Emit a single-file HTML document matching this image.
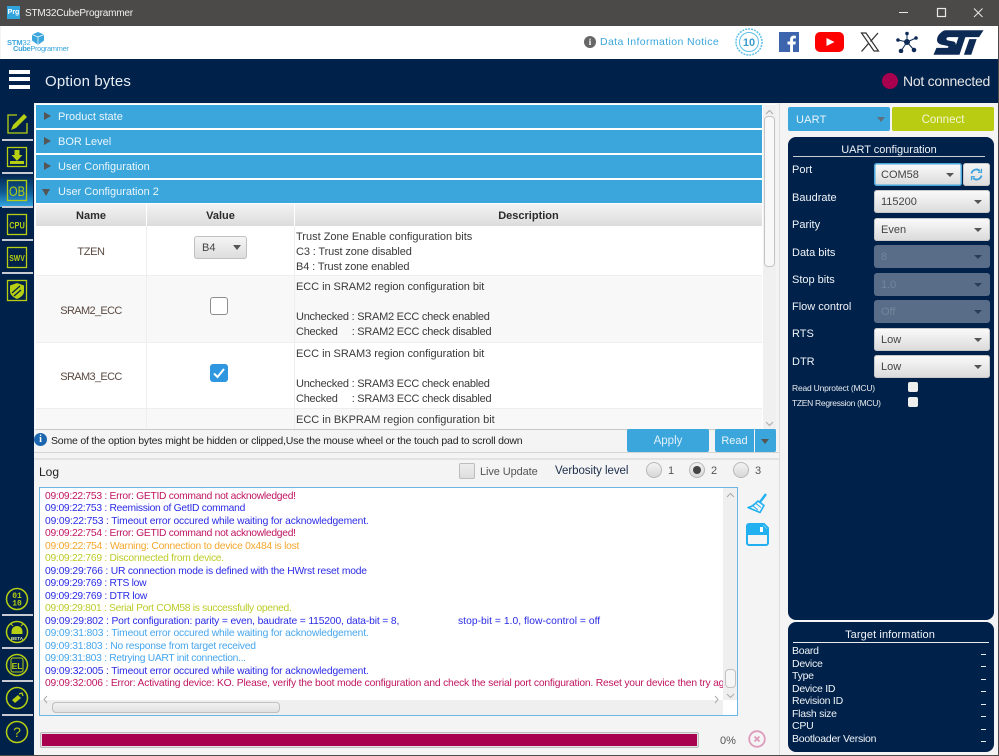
<!DOCTYPE html>
<html><head><meta charset="utf-8"><title>STM32CubeProgrammer</title>
<style>
html,body{margin:0;padding:0;width:999px;height:756px;overflow:hidden;background:#f4f4f4}
body{font-family:"Liberation Sans",sans-serif;font-size:11px;position:relative}
.a,.t{position:absolute}
.t{white-space:nowrap;line-height:14px;height:14px}
.acc{position:absolute;left:36px;width:726px;height:23px;background:#3aa6dc;color:#eaf6fc;font-size:11px;line-height:25px;padding-left:22px;box-sizing:border-box}
.tri{position:absolute;left:8px;top:7px;width:0;height:0;border-left:7px solid #555;border-top:4.5px solid transparent;border-bottom:4.5px solid transparent}
.trd{position:absolute;left:6px;top:9px;width:0;height:0;border-top:7px solid #555;border-left:4.5px solid transparent;border-right:4.5px solid transparent}
.th{position:absolute;top:204px;height:22px;background:linear-gradient(#f3f3f3,#dcdcdc);font-weight:bold;color:#2b2b2b;text-align:center;line-height:24px;font-size:11px}
.c{position:absolute;color:#333;font-size:11px;white-space:nowrap}
.line{line-height:15px;color:#3a3a3a}
.n{letter-spacing:-.25px}
.cb{position:absolute;left:874px;width:116px;height:23px;border-radius:3px;background:linear-gradient(#fbfbfb,#dadada);color:#444;font-size:11px;line-height:25px;padding-left:7px;box-sizing:border-box;box-shadow:0 0 0 1px #c8c8c8 inset}
.cb:after{content:"";position:absolute;right:8px;top:10px;border-top:4.5px solid #555;border-left:4px solid transparent;border-right:4px solid transparent}
.dis{background:#596d88;color:#74859c;box-shadow:none}
.dis:after{border-top-color:#2a3d58}
.lab{position:absolute;left:792px;color:#f0f4f8;white-space:nowrap;line-height:14px;font-size:11px}
.log{position:absolute;left:45px;white-space:nowrap;line-height:13px;font-size:10.3px;letter-spacing:-.28px}
.e{color:#c01560}.b{color:#2a2ae6}.w{color:#f5a72c}.g{color:#bccc28}.l{color:#46a6ee}
.sep{position:absolute;left:2px;width:31px;height:2px;background:#c8ccd2}
.ti{position:absolute;left:792px;color:#f0f4f8;line-height:13px;font-size:10.5px;white-space:nowrap;letter-spacing:-.25px}
.da{position:absolute;left:981px;width:5px;height:1px;background:#e8ecf0}
.ck{position:absolute;width:10px;height:10px;left:908px;background:#eee;border-radius:2px}
.rad{position:absolute;top:462px;width:16px;height:16px;border-radius:50%;background:linear-gradient(#f4f4f4,#d6d6d6);box-shadow:0 0 0 1px #b9b9b9 inset}
</style></head>
<body>
<!-- title bar -->
<div class="a" style="left:0;top:0;width:999px;height:26px;background:#4b4a48"></div>
<div class="a" style="left:7px;top:6px;width:13px;height:13px;background:#32a4dc;color:#fff;font-size:7px;font-weight:bold;line-height:13px;text-align:center">Prg</div>
<div class="t" style="left:25px;top:7px;color:#f0f0f0;font-size:10px;letter-spacing:-.2px">STM32CubeProgrammer</div>
<svg class="a" style="left:890px;top:0" width="109" height="26" fill="none" stroke="#e8e8e8" stroke-width="1"><path d="M9 12.500h9"/><rect x="47.500" y="8.500" width="8" height="8" stroke-width="1.200"/><path d="M84 8.500l8.500 8.500M92.500 8.500L84 17"/></svg>
<!-- white header -->
<div class="a" style="left:1px;top:26px;width:997px;height:33px;background:#fff"></div>
<div class="t" style="left:7px;top:36px;font-size:7.500px;color:#3aa6dc;font-weight:bold;letter-spacing:-.1px">STM<span style="font-weight:normal">32</span></div>
<div class="t" style="left:13px;top:42px;font-size:7.500px;color:#3aa6dc;font-weight:bold;letter-spacing:-.35px">Cube<span style="font-weight:normal">Programmer</span></div>
<svg class="a" style="left:31px;top:32px" width="14" height="13"><path d="M7 0l6 2.500v6L7 13 1 8.500v-6z" fill="#3aa6dc"/><path d="M1 2.500L7 5l6-2.500M7 5v8" stroke="#fff" stroke-width=".7" fill="none"/></svg>
<div class="a" style="left:584px;top:36px;width:12px;height:12px;border-radius:50%;background:#666;color:#fff;font:bold 9px/12px 'Liberation Serif',serif;text-align:center">i</div>
<div class="t" style="left:600px;top:35px;color:#3aa6dc;font-size:10.500px;letter-spacing:.38px">Data Information Notice</div>
<svg class="a" style="left:735px;top:28px" width="28" height="28" fill="none" stroke="#5cc0e8"><circle cx="14" cy="14" r="13" stroke-width="1.500" stroke-dasharray="2 1"/><circle cx="14" cy="14" r="9.500" stroke-width="1"/><text x="14" y="18" text-anchor="middle" font-size="11" font-weight="bold" fill="#3a9ccc" stroke="none" font-family="Liberation Sans">10</text></svg>
<svg class="a" style="left:779px;top:32px" width="20" height="20"><rect width="20" height="20" fill="#3c65ae"/><path d="M14 20v-7.500h2.400l.4-3H14V7.800c0-.9.3-1.400 1.400-1.400h1.500V3.700c-.3 0-1.100-.1-2.100-.1-2.200 0-3.700 1.300-3.700 3.800v2.100H8.500v3h2.600V20z" fill="#fff"/></svg>
<svg class="a" style="left:815px;top:32px" width="29" height="20"><rect width="29" height="20" rx="5" fill="#f00"/><path d="M11.500 6l8 4-8 4z" fill="#fff"/></svg>
<svg class="a" style="left:860px;top:32px" width="20" height="20" fill="none" stroke="#333"><path d="M1.500 1h4.500l12.500 18h-4.500z" stroke-width="1.200"/><path d="M18 1l-7.500 8.500M8.500 11.500L1.500 19.500" stroke-width="1.300"/></svg>
<svg class="a" style="left:896px;top:31px" width="22" height="22" fill="#0d2a55" stroke="#0d2a55"><path d="M11 11L11 2.500M11 11L2 9M11 11L20 7M11 11L5 20M11 11L18 19" stroke-width="1"/><circle cx="11" cy="11" r="2.500"/><circle cx="11" cy="2.500" r="1.300"/><circle cx="2" cy="9" r="1.300"/><circle cx="20" cy="7" r="1.300"/><circle cx="5" cy="20" r="1.800"/><circle cx="18" cy="19" r="1.800"/></svg>
<svg class="a" style="left:933px;top:29px" width="51" height="27" viewBox="0 0 52 27" fill="#0d2a55"><path d="M13 1H51.500L47 8H33L27 26H20L26 8H16C13 8 13 11 15.500 11.500L21 12.500C24.500 13.500 23.500 18 21.500 26H0.500L3.500 19H14.500C16 19 16.300 17.300 14.500 17L8 15.500C2.500 14 3.500 8 7 4.500C9 2.500 10.500 1 13 1Z"/><path d="M37 10h7.500l-5.500 16h-7.500z"/></svg>
<!-- navy -->
<div class="a" style="left:0;top:59px;width:999px;height:44px;background:#00214a"></div>
<div class="a" style="left:0;top:103px;width:34px;height:653px;background:#00214a"></div>
<div class="a" style="left:9px;top:70px;width:21px;height:4px;background:#fff"></div>
<div class="a" style="left:9px;top:77px;width:21px;height:4px;background:#fff"></div>
<div class="a" style="left:9px;top:85px;width:21px;height:4px;background:#fff"></div>
<div class="t" style="left:45px;top:75px;color:#e8eef4;font-size:15px;letter-spacing:.15px">Option bytes</div>
<div class="a" style="left:882px;top:73px;width:16px;height:16px;border-radius:50%;background:#a8004f"></div>
<div class="t" style="left:903px;top:74px;color:#e6e6e6;font-size:14px;letter-spacing:-.25px">Not connected</div>
<!-- sidebar -->
<div class="a" style="left:0;top:174px;width:33px;height:33px;background:linear-gradient(#03264f 0%,#0f5a94 55%,#35a8e2 100%)"></div>
<svg class="a" style="left:0;top:103px" width="34" height="210" fill="none" stroke="#b7cf12" stroke-width="1.300">
<path d="M17 12H8V30H27V20" /><path d="M11 27l2-5L24 11l3 3L16 25z" fill="#b7cf12" stroke="none"/>
<rect x="7.500" y="44.500" width="19" height="19"/><path d="M14.500 47h5v5h3L17 58l-5.500-6h3z M10 58h14v3H10z" fill="#b7cf12" stroke="none"/>
<rect x="7.500" y="77.500" width="19" height="20"/><text x="17" y="93" text-anchor="middle" font-size="13.500" fill="#b7cf12" stroke="none" font-family="Liberation Sans" textLength="16" lengthAdjust="spacingAndGlyphs">OB</text>
<rect x="7.500" y="111.500" width="19" height="20"/><text x="17" y="125.500" text-anchor="middle" font-size="9.500" font-weight="bold" fill="#b7cf12" stroke="none" font-family="Liberation Sans" textLength="15.500" lengthAdjust="spacingAndGlyphs">CPU</text>
<rect x="7.500" y="144.500" width="19" height="20"/><text x="17" y="158" text-anchor="middle" font-size="8" font-weight="bold" fill="#b7cf12" stroke="none" font-family="Liberation Sans" textLength="15.500" lengthAdjust="spacingAndGlyphs">SWV</text>
<rect x="7.500" y="177.500" width="19" height="20"/><path d="M17 180l7 2.500v6c0 3.500-3.500 6-7 7.500-3.500-1.500-7-4-7-7.500v-6z" fill="#b7cf12" stroke="none"/><path d="M12 190l8-7M14 193l7-6" stroke="#00214a" stroke-width="1.200"/>
</svg>
<div class="sep" style="top:139px"></div><div class="sep" style="top:172px"></div><div class="sep" style="top:206px"></div><div class="sep" style="top:239px"></div><div class="sep" style="top:272px"></div>
<svg class="a" style="left:0;top:580px" width="34" height="170" fill="none" stroke="#b7cf12" stroke-width="1.500">
<circle cx="17" cy="19" r="10.500"/><text x="17" y="18" text-anchor="middle" font-size="8" font-weight="bold" fill="#b7cf12" stroke="none" font-family="Liberation Mono">01</text><text x="17" y="25.500" text-anchor="middle" font-size="8" font-weight="bold" fill="#b7cf12" stroke="none" font-family="Liberation Mono">10</text>
<circle cx="17" cy="52" r="10.500"/><path d="M11.500 52c0-4 2.500-6 5.500-6s5.500 2 5.500 6v2h-11z" fill="#b7cf12" stroke="none"/><path d="M13 46l-2-2M21 46l2-2" stroke-width="1"/><text x="17" y="60" text-anchor="middle" font-size="4.500" font-weight="bold" fill="#dfe8a0" stroke="none" font-family="Liberation Sans">BETA</text>
<circle cx="17" cy="85" r="10.500"/><rect x="11" y="78" width="12" height="14" rx="2" stroke-width="1"/><text x="17" y="89" text-anchor="middle" font-size="8.500" font-weight="bold" fill="#b7cf12" stroke="none" font-family="Liberation Sans">EL</text>
<circle cx="17" cy="118" r="10.500"/><path d="M12 120l6-5 3 3-6 5z" fill="#b7cf12" stroke="none"/><path d="M19 114l3-1 1 3" stroke-width="1.200"/>
<circle cx="17" cy="152" r="10.500"/><text x="17" y="157" text-anchor="middle" font-size="14" fill="#b7cf12" stroke="none" font-family="Liberation Sans">?</text>
</svg>
<div class="sep" style="top:614px"></div><div class="sep" style="top:647px"></div><div class="sep" style="top:680px"></div><div class="sep" style="top:714px"></div>
<!-- main -->
<div class="a" style="left:34px;top:103px;width:965px;height:653px;background:#f4f4f4"></div>
<div class="a" style="left:35px;top:104px;width:741px;height:325px;background:#fff"></div>
<div class="acc" style="top:105px"><i class="tri"></i>Product state</div>
<div class="acc" style="top:130px"><i class="tri"></i>BOR Level</div>
<div class="acc" style="top:155px"><i class="tri"></i>User Configuration</div>
<div class="acc" style="top:180px"><i class="trd"></i>User Configuration 2</div>
<div class="th" style="left:36px;width:110px">Name</div>
<div class="th" style="left:147px;width:147px">Value</div>
<div class="th" style="left:295px;width:467px">Description</div>
<div class="a" style="left:36px;top:226px;width:726px;height:49px;background:#fff"></div>
<div class="a" style="left:36px;top:276px;width:726px;height:66px;background:#f8f8f8"></div>
<div class="a" style="left:36px;top:343px;width:726px;height:65px;background:#fff"></div>
<div class="a" style="left:36px;top:409px;width:726px;height:20px;background:#f8f8f8"></div>
<div class="a" style="left:146px;top:226px;width:1px;height:203px;background:#eee"></div>
<div class="a" style="left:294px;top:226px;width:1px;height:203px;background:#eee"></div>
<div class="a" style="left:36px;top:275px;width:726px;height:1px;background:#eee"></div>
<div class="a" style="left:36px;top:342px;width:726px;height:1px;background:#eee"></div>
<div class="a" style="left:36px;top:408px;width:726px;height:1px;background:#eee"></div>
<div class="c" style="left:36px;top:246px;width:110px;text-align:center;color:#5a4a42;letter-spacing:-.35px">TZEN</div>
<div class="c" style="left:36px;top:305px;width:110px;text-align:center;color:#5a4a42;letter-spacing:-.65px">SRAM2_ECC</div>
<div class="c" style="left:36px;top:371px;width:110px;text-align:center;color:#5a4a42;letter-spacing:-.65px">SRAM3_ECC</div>
<div class="a" style="left:194px;top:236px;width:53px;height:23px;border-radius:3px;background:linear-gradient(#f6f6f6,#dcdcdc);box-shadow:0 0 0 1px #c0c0c0 inset;color:#444;line-height:24px;padding-left:8px;box-sizing:border-box">B4<i class="a" style="right:6px;top:9px;border-top:5px solid #555;border-left:4px solid transparent;border-right:4px solid transparent"></i></div>
<div class="a" style="left:210px;top:297px;width:18px;height:18px;border-radius:3px;background:#fff;border:1px solid #8e8e8e;box-sizing:border-box"></div>
<svg class="a" style="left:210px;top:364px" width="18" height="18"><rect width="18" height="18" rx="3" fill="#2f97e0"/><path d="M4 9.500l3.500 3.500L14 5" fill="none" stroke="#fff" stroke-width="2"/></svg>
<div class="c line" style="left:296px;top:230px">Trust Zone Enable configuration bits<br><span style="letter-spacing:-.12px">C3 : Trust zone disabled<br>B4 : Trust zone enabled</span></div>
<div class="c line" style="left:296px;top:280px"><span style="letter-spacing:-.05px">ECC in SRAM2 region configuration bit</span><br><br><span class="n">Unchecked : SRAM2 ECC check enabled<br>Checked &nbsp;&nbsp;&nbsp;&nbsp;: SRAM2 ECC check disabled</span></div>
<div class="c line" style="left:296px;top:347px"><span style="letter-spacing:-.05px">ECC in SRAM3 region configuration bit</span><br><br><span class="n">Unchecked : SRAM3 ECC check enabled<br>Checked &nbsp;&nbsp;&nbsp;&nbsp;: SRAM3 ECC check disabled</span></div>
<div class="c line" style="left:296px;top:413px">ECC in BKPRAM region configuration bit</div>
<!-- v scroll -->
<div class="a" style="left:763px;top:105px;width:13px;height:324px;background:#f0f0f0"></div>
<div class="a" style="left:764px;top:116px;width:11px;height:151px;border-radius:4px;background:#f8f8f8;box-shadow:0 0 0 1px #c4c4c4 inset"></div>
<svg class="a" style="left:763px;top:106px" width="13" height="323" fill="none" stroke="#aaa"><path d="M3 8l3.500-3.500L10 8M3 316l3.500 3.500L10 316"/></svg>
<!-- info row -->
<div class="a" style="left:35px;top:429px;width:741px;height:1px;background:#c8c8c8"></div>
<div class="a" style="left:34px;top:433px;width:13px;height:13px;border-radius:50%;background:#1c66b0;color:#fff;font:bold 10px/13px 'Liberation Serif',serif;text-align:center">i</div>
<div class="t" style="left:51px;top:434px;color:#222;font-size:10.500px;letter-spacing:-.2px">Some of the option bytes might be hidden or clipped,Use the mouse wheel or the touch pad to scroll down</div>
<div class="a" style="left:627px;top:429px;width:82px;height:23px;background:#3aa6dc;border-radius:2px;color:#dff0fa;text-align:center;line-height:25px;font-size:11.500px">Apply</div>
<div class="a" style="left:715px;top:429px;width:39px;height:23px;background:#3aa6dc;border-radius:2px 0 0 2px;color:#e8f5fc;text-align:center;line-height:25px;font-size:11px">Read</div>
<div class="a" style="left:755px;top:429px;width:21px;height:23px;background:#3aa6dc;border-radius:0 2px 2px 0"><i class="a" style="left:6px;top:10px;border-top:5px solid #555;border-left:4.500px solid transparent;border-right:4.500px solid transparent"></i></div>
<div class="a" style="left:34px;top:452px;width:745px;height:1px;background:#d4d4d4"></div>
<div class="a" style="left:34px;top:458px;width:745px;height:2px;background:#e2e2e2"></div>
<!-- log header -->
<div class="t" style="left:39px;top:465px;color:#222;font-size:12px">Log</div>
<div class="a" style="left:459px;top:463px;width:16px;height:16px;border-radius:2px;background:linear-gradient(#eee,#ddd);box-shadow:0 0 0 1px #bdbdbd inset"></div>
<div class="t" style="left:480px;top:465px;color:#555;font-size:11px;letter-spacing:-.1px">Live Update</div>
<div class="t" style="left:555px;top:464px;color:#1c2e4a;font-size:11.500px;letter-spacing:-.05px">Verbosity level</div>
<div class="rad" style="left:646px"></div><div class="rad" style="left:689px"></div><div class="a" style="left:693px;top:466px;width:8px;height:8px;border-radius:50%;background:#444"></div><div class="rad" style="left:733px"></div>
<div class="t" style="left:668px;top:464px;color:#555;font-size:11px">1</div><div class="t" style="left:711px;top:464px;color:#555;font-size:11px">2</div><div class="t" style="left:755px;top:464px;color:#555;font-size:11px">3</div>
<!-- log -->
<div class="a" style="left:39px;top:487px;width:699px;height:229px;background:#fff;box-shadow:0 0 0 1px #6db6e2 inset"></div>
<div class="log e" style="top:490px">09:09:22:753 : Error: GETID command not acknowledged!</div>
<div class="log b" style="top:502px">09:09:22:753 : Reemission of GetID command</div>
<div class="log b" style="top:515px;letter-spacing:-.15px">09:09:22:753 : Timeout error occured while waiting for acknowledgement.</div>
<div class="log e" style="top:527px">09:09:22:754 : Error: GETID command not acknowledged!</div>
<div class="log w" style="top:540px;letter-spacing:-.25px">09:09:22:754 : Warning: Connection to device 0x484 is lost</div>
<div class="log g" style="top:552px">09:09:22:769 : Disconnected from device.</div>
<div class="log b" style="top:565px;letter-spacing:-.2px">09:09:29:766 : UR connection mode is defined with the HWrst reset mode</div>
<div class="log b" style="top:577px">09:09:29:769 : RTS low</div>
<div class="log b" style="top:590px">09:09:29:769 : DTR low</div>
<div class="log g" style="top:602px;letter-spacing:-.31px">09:09:29:801 : Serial Port COM58 is successfully opened.</div>
<div class="log b" style="top:615px;letter-spacing:-.15px">09:09:29:802 : Port configuration: parity = even, baudrate = 115200, data-bit = 8,</div>
<div class="log b" style="top:615px;left:458px;letter-spacing:.03px">stop-bit = 1.0, flow-control = off</div>
<div class="log l" style="top:627px;letter-spacing:-.15px">09:09:31:803 : Timeout error occured while waiting for acknowledgement.</div>
<div class="log l" style="top:640px;letter-spacing:-.23px">09:09:31:803 : No response from target received</div>
<div class="log l" style="top:652px;letter-spacing:-.3px">09:09:31:803 : Retrying UART init connection...</div>
<div class="log b" style="top:665px;letter-spacing:-.15px">09:09:32:005 : Timeout error occured while waiting for acknowledgement.</div>
<div class="log e" style="top:677px;width:678px;overflow:hidden;letter-spacing:-.19px">09:09:32:006 : Error: Activating device: KO. Please, verify the boot mode configuration and check the serial port configuration. Reset your device then try again...</div>
<div class="a" style="left:723px;top:488px;width:14px;height:212px;background:#efefef"></div>
<div class="a" style="left:725px;top:669px;width:11px;height:19px;border-radius:4px;background:#f6f6f6;box-shadow:0 0 0 1px #c0c0c0 inset"></div>
<div class="a" style="left:40px;top:700px;width:683px;height:15px;background:#efefef"></div>
<div class="a" style="left:52px;top:702px;width:228px;height:11px;border-radius:4px;background:linear-gradient(#f4f4f4,#dedede);box-shadow:0 0 0 1px #c0c0c0 inset"></div>
<svg class="a" style="left:40px;top:488px" width="698" height="228" fill="none" stroke="#aaa"><path d="M687 9l3.500-3.500L694 9M687 206l3.500 3.500L694 206M7 208l-3 3.500 3 3.500M675 208l3 3.500-3 3.500"/></svg>
<svg class="a" style="left:747px;top:491px" width="22" height="24" fill="none" stroke="#22b0f0" stroke-width="1.600" stroke-linejoin="round"><path d="M19 3l-6 8" stroke-width="2.400"/><path d="M11 10l6 4.500-4 7-12-5c3 0 6-2.500 10-6.500z"/><path d="M6 15l5 4M9 12.500l5 4" stroke-width="1"/></svg>
<svg class="a" style="left:746px;top:523px" width="23" height="23"><path d="M3 1h15l4 4v15a2 2 0 0 1-2 2H3a2 2 0 0 1-2-2V3a2 2 0 0 1 2-2z" fill="none" stroke="#22b0f0" stroke-width="2"/><path d="M2 2h15l4 4v6H2z" fill="#22b0f0"/><rect x="14" y="4" width="3" height="5" fill="#fff"/></svg>
<!-- progress -->
<div class="a" style="left:40px;top:732px;width:659px;height:16px;border-radius:2px;background:#e4e4e4;box-shadow:0 0 0 1px #bcbcbc inset"></div>
<div class="a" style="left:42px;top:734px;width:655px;height:12px;background:#a8004f"></div>
<div class="t" style="left:720px;top:734px;color:#555;font-size:11px">0%</div>
<svg class="a" style="left:748px;top:730px" width="18" height="18" fill="none" stroke="#dd9cbc" stroke-width="1.800"><circle cx="9" cy="9" r="7.800"/><path d="M6.500 6.500l5 5M11.500 6.500l-5 5"/></svg>
<div class="a" style="left:779px;top:103px;width:1px;height:653px;background:#dedede"></div>
<!-- right -->
<div class="a" style="left:788px;top:107px;width:102px;height:24px;background:#3aa6dc;border-radius:2px;color:#eaf6fc;line-height:26px;padding-left:8px;box-sizing:border-box;font-size:11px;letter-spacing:.2px">UART<i class="a" style="right:5px;top:10px;border-top:5px solid #5f6f7c;border-left:4px solid transparent;border-right:4px solid transparent"></i></div>
<div class="a" style="left:892px;top:107px;width:102px;height:24px;background:#b9cc12;border-radius:2px;color:#f2f6d0;line-height:26px;text-align:center;font-size:11.500px">Connect</div>
<div class="a" style="left:788px;top:137px;width:206px;height:483px;background:#00214a;border-radius:8px"></div>
<div class="t" style="left:788px;top:143px;width:202px;text-align:center;color:#f0f4f8;font-size:11px;letter-spacing:0">UART configuration</div>
<div class="a" style="left:793px;top:156px;width:192px;height:1px;background:#c8ccd4"></div>
<div class="lab" style="top:163px">Port</div><div class="lab" style="top:191px">Baudrate</div><div class="lab" style="top:218px">Parity</div><div class="lab" style="top:246px">Data bits</div><div class="lab" style="top:273px">Stop bits</div><div class="lab" style="top:300px">Flow control</div><div class="lab" style="top:327px">RTS</div><div class="lab" style="top:355px">DTR</div>
<div class="cb" style="top:163px;width:88px;box-shadow:0 0 0 1.500px #48a8dc inset">COM58</div>
<div class="a" style="left:963px;top:163px;width:27px;height:23px;border-radius:3px;background:linear-gradient(#f6f6f6,#dcdcdc);box-shadow:0 0 0 1px #c8c8c8 inset"></div>
<svg class="a" style="left:970px;top:168px" width="13" height="13" fill="none" stroke="#3aa0dc" stroke-width="1.800"><path d="M1.500 5.500A5 5 0 0 1 10 3M11.500 7.500A5 5 0 0 1 3 10"/><path d="M11.500 .8v3.500H8M1.500 12.200V8.700H5" stroke-width="1.200"/></svg>
<div class="cb" style="top:190px">115200</div>
<div class="cb" style="top:218px">Even</div>
<div class="cb dis" style="top:245px">8</div>
<div class="cb dis" style="top:273px">1.0</div>
<div class="cb dis" style="top:300px">Off</div>
<div class="cb" style="top:328px">Low</div>
<div class="cb" style="top:355px">Low</div>
<div class="t" style="left:792px;top:381px;color:#e8ecf0;font-size:8.500px;letter-spacing:-.2px">Read Unprotect (MCU)</div>
<div class="t" style="left:792px;top:396px;color:#e8ecf0;font-size:8.500px;letter-spacing:-.3px">TZEN Regression (MCU)</div>
<div class="ck" style="top:382px"></div><div class="ck" style="top:397px"></div>
<!-- target -->
<div class="a" style="left:788px;top:622px;width:206px;height:130px;background:#00214a;border-radius:8px"></div>
<div class="t" style="left:788px;top:628px;width:204px;text-align:center;color:#f0f4f8;font-size:11px;letter-spacing:.1px">Target information</div>
<div class="a" style="left:793px;top:642px;width:196px;height:1px;background:#e8ecf0"></div>
<div class="ti" style="top:645px">Board</div><div class="ti" style="top:658px">Device</div><div class="ti" style="top:670px">Type</div><div class="ti" style="top:683px">Device ID</div><div class="ti" style="top:695px">Revision ID</div><div class="ti" style="top:708px">Flash size</div><div class="ti" style="top:720px">CPU</div><div class="ti" style="top:733px">Bootloader Version</div>
<div class="da" style="top:654px"></div><div class="da" style="top:666px"></div><div class="da" style="top:679px"></div><div class="da" style="top:691px"></div><div class="da" style="top:704px"></div><div class="da" style="top:716px"></div><div class="da" style="top:729px"></div><div class="da" style="top:741px"></div>
<div class="a" style="left:0;top:755px;width:999px;height:1px;background:#4b4a48"></div>
<div class="a" style="left:998px;top:0;width:1px;height:756px;background:#4b4a48"></div>
</body></html>
